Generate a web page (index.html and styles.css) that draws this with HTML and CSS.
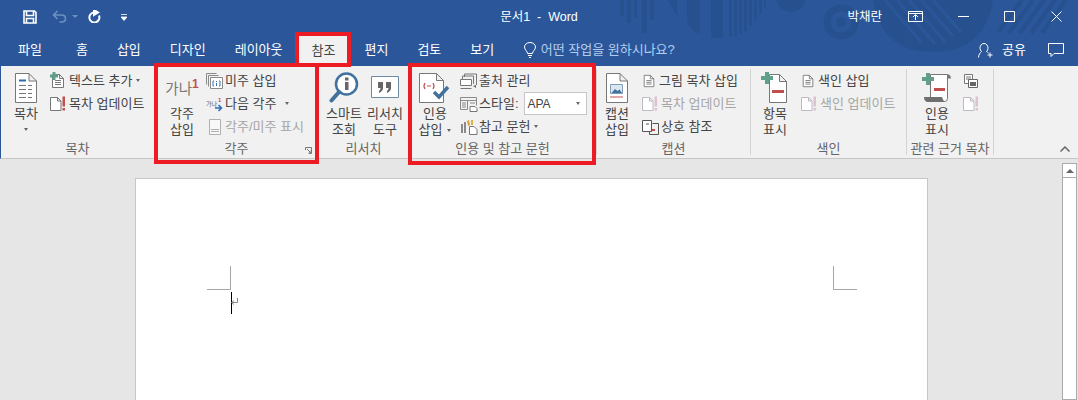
FILE: index.html
```html
<!DOCTYPE html>
<html lang="ko">
<head>
  <meta charset="UTF-8" />
  <title>문서1 - Word</title>
  <link rel="stylesheet" href="styles.css">
</head>
<body>
  <svg class="sprites" width="0" height="0">
    <symbol id="doc-alert" viewBox="0 0 18 16">
      <path d="M.5 1.5h7l3.500 3.500v9.500h-10.500z M7.500 1.500v3.500h3.500" fill="#fff" stroke="currentColor"/>
      <rect class="bang" x="12.500" y="0.500" width="2.500" height="10"/>
      <rect class="bang" x="12.500" y="12" width="2.500" height="2.500"/>
    </symbol>
    <symbol id="doc-lines" viewBox="0 0 16 16">
      <path d="M2.500 1.500h7l4 4v9h-11z M9.500 1.500v4h4" fill="#fff" stroke="#777"/>
      <path d="M5 7.500h6 M5 9.500h6 M5 11.500h6" stroke="#777"/>
    </symbol>
    <symbol id="green-plus" viewBox="0 0 11 11">
      <path d="M3.500 0h4v3.500h3.500v4h-3.500v3.500h-4v-3.500h-3.500v-4h3.500z" fill="#5f9f8c"/>
    </symbol>
  </svg>

  <!-- Title bar and tabs -->
  <header class="chrome">
    <svg class="chrome-art" width="478" height="66" viewBox="600 0 478 66">
      <g fill="#27508f">
        <path d="M620 0h4v16h-4z M627 0h4v23h-4z M634 0h3v18h-3z M642 0h5v33h-5z M650 0h4v20h-4z"/>
        <path d="M668 0h9v16z"/>
        <path d="M687 0h13v34q-10-4-13-12z M711 0h12v38h-12z"/>
        <path d="M729 0h3v37h-3z M734 0h3v36h-3z M739 0h3v34h-3z M744 0h3v31h-3z M749 0h3v26h-3z M754 0h3v20h-3z M759 0h3v14h-3z M764 0h2v8h-2z"/>
        <path d="M776 0h30q-4 12-15 12t-15-12z"/>
        <path d="M873 0h120q-8 52-60 52t-60-52z"/>
      </g>
      <circle cx="841" cy="22" r="14" fill="none" stroke="#27508f" stroke-width="7"/>
      <circle cx="841" cy="22" r="5" fill="#27508f"/>
      <g stroke="#2b579a" stroke-width="3">
        <path d="M885 0l36 42 M897 0l38 44 M909 0l36 42 M921 0l32 36 M933 0l28 32"/>
      </g>
      <g stroke="#27508f" stroke-width="4">
        <path d="M1022 0l-24 32 M1033 0l-24 33 M1044 0l-24 33 M1055 0l-24 33 M1066 0l-24 33"/>
      </g>
    </svg>

    <div class="titlebar">
      <div class="qat">
        <svg class="qat-save" width="14" height="14" viewBox="0 0 14 14"><path d="M1 1h10.500l1.500 1.500v10.500h-12z M3.500 1v4.500h7v-4.500 M3.500 13v-4.500h7v4.500" fill="none" stroke="#fff" stroke-width="1.600"/></svg>
        <svg class="qat-undo" width="15" height="13" viewBox="0 0 15 13"><path d="M5.500 1l-4 4 4 4 M1.500 5h8q4 0 4 3.500t-4 3.500h-2" fill="none" stroke="#6e8fc2" stroke-width="1.600"/></svg>
        <span class="qat-drop dim"></span>
        <svg class="qat-redo" width="14" height="13" viewBox="0 0 14 13"><path d="M9.500 2.500h-3a5 5 0 1 0 5.500 3 M7 0v5l4-2.500z" fill="none" stroke="#fff" stroke-width="2"/></svg>
        <svg class="qat-more" width="6" height="8" viewBox="0 0 6 8"><path d="M0 1.500h6 M0 4h6l-3 3.500z" fill="#fff" stroke="#fff" stroke-width="0.800"/></svg>
      </div>
      <div class="doc-title">문서1&nbsp; - &nbsp;Word</div>
      <div class="win">
        <span class="user">박채란</span>
        <svg class="win-display" width="15" height="11" viewBox="0 0 15 11"><path d="M.5.500h14v10h-14z M.5 2.500h14 M7.500 9v-5 M5 6l2.500-2.500 2.500 2.500" fill="none" stroke="#fff"/></svg>
        <svg class="win-min" width="11" height="1" viewBox="0 0 11 1"><path d="M0 .5h11" stroke="#fff"/></svg>
        <svg class="win-max" width="11" height="11" viewBox="0 0 11 11"><path d="M.5.500h10v10h-10z" fill="none" stroke="#fff"/></svg>
        <svg class="win-close" width="11" height="11" viewBox="0 0 11 11"><path d="M.5.500l10 10 M10.500.500l-10 10" stroke="#fff"/></svg>
      </div>
    </div>

    <nav class="tabs">
      <span class="tab tab-file">파일</span>
      <span class="tab">홈</span>
      <span class="tab">삽입</span>
      <span class="tab">디자인</span>
      <span class="tab">레이아웃</span>
      <span class="tab active">참조</span>
      <span class="tab">편지</span>
      <span class="tab">검토</span>
      <span class="tab">보기</span>
      <span class="tell">
        <svg width="12" height="16" viewBox="0 0 12 16"><path d="M3.500 11.500c0-2.500-3-3.500-3-6.500a5.500 4.500 0 0 1 11 0c0 3-3 4-3 6.500z M4 13.500h4 M5 15.500h2" fill="none" stroke="#fff"/></svg>
        어떤 작업을 원하시나요?
      </span>
      <span class="share">
        <svg width="15" height="16" viewBox="0 0 15 16"><path d="M.5 15.500c0-3 2-5 3-6a4 4.500 0 1 1 5 0q1 .5 2 1.500 M9.500 13h5 M12 10.500v5" fill="none" stroke="#fff"/></svg>
        공유
      </span>
      <svg class="comment" width="16" height="14" viewBox="0 0 16 14"><path d="M.5.500h15v10h-9.500l-3 3v-3h-2.500z" fill="none" stroke="#fff"/></svg>
    </nav>
  </header>

  <!-- Ribbon -->
  <section class="ribbon">
    <div class="group g-toc">
      <div class="group-body">
        <div class="big">
          <svg class="big-icon" width="22" height="30" viewBox="0 0 22 30">
            <path d="M.5.500h13.500l7.500 7.500v21.500h-21z M14 .500v7.500h7.500" fill="#fff" stroke="#777"/>
            <path d="M4 7.500h7" stroke="#2b6cb0" stroke-width="2"/>
            <path d="M4 12.500h7 M13 12.500h4 M4 16.500h7 M13 16.500h4 M4 20.500h7 M13 20.500h4 M4 24.500h7 M13 24.500h4" stroke="#777"/>
          </svg>
          <span class="big-label">목차</span>
          <span class="caret big-caret"></span>
        </div>
        <div class="small-col">
          <div class="row">
            <span class="row-icon has-plus">
              <svg width="16" height="16"><use href="#doc-lines"/></svg>
              <svg class="mini-plus" width="8" height="8"><use href="#green-plus"/></svg>
            </span>
            <span class="row-text tight">텍스트 추가</span><span class="caret"></span>
          </div>
          <div class="row">
            <svg class="row-icon alert" width="18" height="16"><use href="#doc-alert"/></svg>
            <span class="row-text">목차 업데이트</span>
          </div>
        </div>
      </div>
      <div class="group-label">목차</div>
    </div>

    <div class="group g-note">
      <div class="group-body">
        <div class="big">
          <div class="note-mark">가나<sup>1</sup></div>
          <span class="big-label">각주<br>삽입</span>
        </div>
        <div class="small-col">
          <div class="row">
            <svg class="row-icon" width="18" height="16" viewBox="0 0 18 16">
              <path d="M.5 11.500v-11h10 M2.500 13.500v-11h10" fill="none" stroke="#8a8a8a"/>
              <path d="M4.500 4.500h12v11h-12z" fill="#fff" stroke="#8a8a8a"/>
              <path d="M8 8h-1v5h1 M13 8h1v5h-1 M10.500 8v1 M10.500 10v3" fill="none" stroke="#3474b5"/>
            </svg>
            <span class="row-text">미주 삽입</span>
          </div>
          <div class="row">
            <svg class="row-icon" width="18" height="16" viewBox="0 0 18 16">
              <text x="0" y="10" class="tiny">가나</text>
              <text x="12" y="6" class="tiny-red">1</text>
              <path d="M9 12h6 M12.500 9l3 3-3 3" fill="none" stroke="#2b6cb0" stroke-width="1.500"/>
            </svg>
            <span class="row-text">다음 각주</span><span class="caret caret-far"></span>
          </div>
          <div class="row off">
            <svg class="row-icon" width="18" height="16" viewBox="0 0 18 16">
              <path d="M3.500.500h11v15h-11z" fill="#f8f8f8" stroke="#b0b0b0"/>
              <path d="M5 10.500h8 M5 12.500h8" stroke="#b0b0b0"/>
            </svg>
            <span class="row-text">각주/미주 표시</span>
          </div>
        </div>
      </div>
      <div class="group-label">각주</div>
      <svg class="launcher" width="7" height="7" viewBox="0 0 7 7"><path d="M.5 3v-2.500h6v6h-2.500 M2 2l4 4 M3.500 6h2.500v-2.500" fill="none" stroke="#777"/></svg>
    </div>

    <div class="group g-research">
      <div class="group-body">
        <div class="big">
          <svg class="big-icon" width="30" height="32" viewBox="0 0 30 32">
            <circle cx="17.500" cy="12" r="10.500" fill="#fff" stroke="#41719c" stroke-width="2.500"/>
            <path d="M10 20l-7.500 8.500" stroke="#41719c" stroke-width="4" stroke-linecap="round"/>
            <rect x="16" y="10" width="3.500" height="8" fill="#666"/>
            <rect x="16" y="5.500" width="3.500" height="3" fill="#666"/>
          </svg>
          <span class="big-label">스마트<br>조회</span>
        </div>
        <div class="big">
          <svg class="big-icon" width="28" height="32" viewBox="0 0 28 32">
            <path d="M.5 4.500h27v21h-27z" fill="#fff" stroke="#6e8aa5"/>
            <path d="M7 10h5v6q0 3-4 5v-2q1.500-1 1.500-3h-2.500z M15 10h5v6q0 3-4 5v-2q1.500-1 1.500-3h-2.500z" fill="#666"/>
          </svg>
          <span class="big-label">리서치<br>도구</span>
        </div>
      </div>
      <div class="group-label">리서치</div>
    </div>

    <div class="group g-cite">
      <div class="group-body">
        <div class="big">
          <svg class="big-icon" width="32" height="32" viewBox="0 0 32 32">
            <path d="M.5 1.500h17l7 7v22h-24z M17.500 1.500v7h7" fill="#fff" stroke="#777"/>
            <path d="M6 11q-2 3 0 6 M14 11q2 3 0 6 M8 14h4" fill="none" stroke="#c0504d" stroke-width="1.200"/>
            <path d="M15 20l5 5 9-10" fill="none" stroke="#41719c" stroke-width="3.500"/>
          </svg>
          <span class="big-label">인용<br>삽입<span class="caret caret-inline"></span></span>
        </div>
        <div class="small-col">
          <div class="row">
            <svg class="row-icon" width="18" height="16" viewBox="0 0 18 16">
              <path d="M4.500 4v-3h12v11" fill="none" stroke="#777"/>
              <path d="M2.500 6v-3h11v8" fill="none" stroke="#777"/>
              <path d="M.5 6.500h11v6h-11z M.5 15.500h11" fill="#fff" stroke="#777"/>
              <path d="M13 13l3-1v3z" fill="#666"/>
            </svg>
            <span class="row-text">출처 관리</span>
          </div>
          <div class="row">
            <svg class="row-icon" width="18" height="16" viewBox="0 0 18 16">
              <path d="M.5 1.500h16v3h-16z M.5 4.500h7v9h-7z M8.500 4.500h8v5" fill="none" stroke="#8a8a8a"/>
              <path d="M2 7h4 M2 9h4 M2 11h4 M10 7h5" stroke="#8a8a8a"/>
              <path d="M10 10.500h5l2 2v3h-7z" fill="#fff" stroke="#777"/>
            </svg>
            <span class="row-text">스타일:</span>
            <span class="combo">APA<span class="caret combo-caret"></span></span>
          </div>
          <div class="row">
            <svg class="row-icon" width="18" height="16" viewBox="0 0 18 16">
              <path d="M1 5h2v9h-2z M4 3h2v11h-2z" fill="#8a8a8a"/>
              <path d="M7 2l2-1 1 5-2 1z" fill="#e0a030"/>
              <path d="M11 1h2v5h-2z" fill="#d9b44a"/>
              <path d="M9.500 7.500h4.500l3 3v5h-7.500z" fill="#fff" stroke="#777"/>
            </svg>
            <span class="row-text">참고 문헌</span><span class="caret"></span>
          </div>
        </div>
      </div>
      <div class="group-label">인용 및 참고 문헌</div>
    </div>

    <div class="group g-caption">
      <div class="group-body">
        <div class="big">
          <svg class="big-icon" width="22" height="30" viewBox="0 0 22 30">
            <path d="M.5.500h13.500l7.500 7.500v21.500h-21z M14 .500v7.500h7.500" fill="#fff" stroke="#777"/>
            <path d="M4.500 11.500h12v9h-12z" fill="#dce6f1" stroke="#7f9db9"/>
            <path d="M5.500 20l3.500-4 2.500 2 2-1.500 2.500 3.500z" fill="#41719c"/>
            <path d="M4 24h13" stroke="#c0504d"/>
          </svg>
          <span class="big-label">캡션<br>삽입</span>
        </div>
        <div class="small-col">
          <div class="row">
            <svg class="row-icon icon-doc" width="14" height="16"><use href="#doc-lines"/></svg>
            <span class="row-text">그림 목차 삽입</span>
          </div>
          <div class="row off">
            <svg class="row-icon alert" width="18" height="16"><use href="#doc-alert"/></svg>
            <span class="row-text">목차 업데이트</span>
          </div>
          <div class="row">
            <svg class="row-icon" width="18" height="16" viewBox="0 0 18 16">
              <path d="M.5 1.500h9v11h-9z" fill="#fff" stroke="#555"/>
              <path d="M10.500 4.500h6v11h-9v-3" fill="none" stroke="#555"/>
              <path d="M4 5h3" stroke="#555"/>
              <path d="M10 11h3" stroke="#c0504d" stroke-width="2"/>
            </svg>
            <span class="row-text">상호 참조</span>
          </div>
        </div>
      </div>
      <div class="group-label">캡션</div>
    </div>

    <div class="group g-index">
      <div class="group-body">
        <div class="big">
          <svg class="big-icon" width="28" height="32" viewBox="0 0 28 32">
            <path d="M8.500 2.500h10l7 7v21h-17z M18.500 2.500v7h7" fill="#fff" stroke="#777"/>
            <path d="M4 0h4v4h4v4h-4v4h-4v-4h-4v-4h4z" fill="#5f9f8c"/>
            <rect x="11" y="18" width="12" height="3" fill="#c0504d"/>
          </svg>
          <span class="big-label">항목<br>표시</span>
        </div>
        <div class="small-col">
          <div class="row">
            <svg class="row-icon icon-doc" width="14" height="16"><use href="#doc-lines"/></svg>
            <span class="row-text">색인 삽입</span>
          </div>
          <div class="row off">
            <svg class="row-icon alert" width="18" height="16"><use href="#doc-alert"/></svg>
            <span class="row-text">색인 업데이트</span>
          </div>
        </div>
      </div>
      <div class="group-label">색인</div>
    </div>

    <div class="group g-refs">
      <div class="group-body">
        <div class="big">
          <svg class="big-icon" width="30" height="30" viewBox="0 0 30 30">
            <path d="M8.500 1.500h17v24q0 3-3 3h-14z" fill="#fff" stroke="#777"/>
            <path d="M25 1.500h2q2 1 2 4h-4z" fill="#777"/>
            <path d="M2 24h18q1 4 3 5h-18q-3-1-3-5z" fill="#6f6f6f"/>
            <path d="M4 0h4v4h4v4h-4v4h-4v-4h-4v-4h4z" fill="#5f9f8c"/>
            <rect x="12" y="15" width="11" height="3" fill="#c0504d"/>
          </svg>
          <span class="big-label">인용<br>표시</span>
        </div>
        <div class="small-col">
          <div class="row">
            <svg class="row-icon" width="16" height="16" viewBox="0 0 16 16">
              <path d="M1.500 1.500h8v9h-8z" fill="#fff" stroke="#777"/>
              <path d="M3 4h5 M3 6h5" stroke="#777"/>
              <path d="M5.500 6.500h9v8h-9z" fill="#fff" stroke="#666"/>
              <rect x="7" y="9" width="6" height="4" fill="#666"/>
            </svg>
          </div>
          <div class="row off">
            <svg class="row-icon alert" width="18" height="16"><use href="#doc-alert"/></svg>
          </div>
        </div>
      </div>
      <div class="group-label">관련 근거 목차</div>
    </div>

    <svg class="collapse" width="10" height="6" viewBox="0 0 10 6"><path d="M.5 5.500l4.500-4.500 4.500 4.500" fill="none" stroke="#666" stroke-width="1.500"/></svg>
  </section>

  <!-- Document area -->
  <main class="canvas">
    <div class="doc-area">
      <div class="sheet">
        <span class="margin-mark mark-left"></span>
        <span class="margin-mark mark-right"></span>
        <span class="caret-bar"></span>
        <svg class="return-mark" width="7" height="8" viewBox="0 0 7 8"><path d="M6.500 0v4.500h-6 M3 2.500l-2.500 2 2.500 2" fill="none" stroke="#888"/></svg>
      </div>
    </div>
    <div class="scrollbar">
      <div class="scroll-up"></div>
    </div>
  </main>

  <!-- Red annotation boxes -->
  <div class="callout callout-tab"></div>
  <div class="callout callout-note"></div>
  <div class="callout callout-cite"></div>
</body>
</html>
```

FILE: styles.css
```css
:root {
  --word-blue: #2b579a;
  --ribbon: #f1f1f1;
  --ink: #444;
  --muted: #a6a6a6;
  --line: #c6c6c6;
  --bang: #c0504d;
}

* {
  box-sizing: border-box;
}

html, body {
  margin: 0;
  padding: 0;
  height: 400px;
  overflow: hidden;
  background-color: #e6e6e6;
  font-family: "Liberation Sans", "Noto Sans CJK KR", sans-serif;
  font-size: 13px;
  line-height: 16px;
  color: var(--ink);
}

.sprites {
  position: absolute;
}

/* title bar + tabs */
.chrome {
  position: relative;
  height: 66px;
  background-color: var(--word-blue);
  color: #fff;
}

.chrome-art {
  position: absolute;
  top: 0;
  left: 600px;
}

.titlebar {
  position: relative;
  height: 33px;
  display: grid;
  grid-template-columns: 1fr auto 1fr;
  align-items: center;
}

.qat {
  display: flex;
  align-items: center;
  padding-left: 23px;
}

.qat-undo {
  margin-left: 15px;
}

.qat-drop {
  width: 0;
  height: 0;
  margin-left: 5px;
  border: 3px solid transparent;
  border-top-color: #6e8fc2;
  border-bottom: 0;
}

.qat-redo {
  margin-left: 9px;
}

.qat-more {
  margin-left: 20px;
}

.doc-title {
  font-size: 12.500px;
}

.win {
  display: flex;
  align-items: center;
  justify-content: flex-end;
  font-size: 12.500px;
}

.user {
  margin-right: 26px;
}

.win-display {
  margin-right: 35px;
}

.win-min {
  margin-right: 35px;
}

.win-max {
  margin-right: 36px;
}

.win-close {
  margin-right: 16px;
}

.tabs {
  position: relative;
  height: 33px;
  display: flex;
  align-items: center;
  padding-left: 3.500px;
}

.tab {
  padding: 0 14.500px;
  white-space: nowrap;
}

.tab-file {
  margin-right: 5px;
}

.tab.active {
  align-self: flex-end;
  height: 30px;
  line-height: 30px;
  background-color: var(--ribbon);
  color: var(--ink);
}

.tell {
  display: flex;
  align-items: center;
  gap: 5px;
  margin-left: 15px;
  color: #b3cdf0;
  white-space: nowrap;
}

.share {
  display: flex;
  align-items: center;
  gap: 9px;
  margin-left: auto;
  white-space: nowrap;
}

.comment {
  margin: 0 14px 0 22px;
}

/* ribbon */
.ribbon {
  height: 93px;
  display: flex;
  background-color: var(--ribbon);
  border-left: 1px solid var(--word-blue);
  border-bottom: 1px solid var(--line);
}

.group {
  position: relative;
  flex: none;
  height: 86px;
  margin-top: 3px;
  display: flex;
  flex-direction: column;
  border-right: 1px solid #d4d4d4;
}

.g-toc { width: 154px; }
.g-note { width: 164px; }
.g-research { width: 90px; }
.g-cite { width: 188px; }
.g-caption { width: 154px; }
.g-index { width: 156px; }
.g-refs { width: 87px; }

.group-body {
  flex: 1;
  display: flex;
  gap: 4px;
  padding-left: 5px;
}

.g-note .group-body { padding-left: 7px; }
.g-research .group-body { gap: 1px; }
.g-cite .group-body { padding-left: 6px; gap: 5px; }
.g-caption .group-body { padding-left: 0; gap: 5px; }
.g-index .group-body { padding-left: 4px; gap: 6px; }
.g-refs .group-body { padding-left: 10px; gap: 6px; }

.group-label {
  height: 14px;
  text-align: center;
  color: #666;
  white-space: nowrap;
}

.launcher {
  position: absolute;
  right: 6px;
  bottom: 1px;
}

.big {
  flex: none;
  width: 40px;
  display: flex;
  flex-direction: column;
  align-items: center;
  text-align: center;
}

.big-icon {
  height: 32px;
  margin: 3px 0 2px;
}

.big-label {
  display: block;
  white-space: nowrap;
}

.note-mark {
  height: 37px;
  padding-top: 9px;
  font-size: 14.500px;
  line-height: 22px;
  color: #777;
  white-space: nowrap;
}

.note-mark sup {
  font-size: 12px;
  line-height: 0;
  font-weight: 700;
  color: #c0504d;
}

.small-col {
  display: flex;
  flex-direction: column;
}

.row {
  height: 23px;
  display: flex;
  align-items: center;
  white-space: nowrap;
}

.row.off {
  --bang: #dcc2d2;
  color: var(--muted);
}

.row-icon {
  flex: none;
  margin-right: 1px;
  color: #777;
}

.row.off .row-icon {
  color: #c0b8c4;
}

.bang {
  fill: var(--bang);
}

.has-plus {
  position: relative;
  width: 16px;
  height: 16px;
  margin-right: 3px;
}

.mini-plus {
  position: absolute;
  top: -1px;
  left: 0;
}

.icon-doc {
  margin: 0 3px 0 0;
}

.tiny {
  font-size: 6px;
  fill: #555;
}

.tiny-red {
  font-size: 6px;
  font-weight: 700;
  fill: #c0504d;
}

.caret {
  display: inline-block;
  width: 0;
  height: 0;
  margin-left: 4px;
  border: 2.500px solid transparent;
  border-top: 3px solid #666;
  border-bottom: 0;
  vertical-align: middle;
}

.big-caret {
  margin: 6px 0 0;
}

.caret-far {
  margin-left: 9px;
}

.caret-inline {
  margin-left: 5px;
}

.combo {
  width: 63px;
  height: 23px;
  margin-left: 5px;
  padding-left: 3px;
  display: flex;
  align-items: center;
  justify-content: space-between;
  background-color: #fff;
  border: 1px solid var(--line);
  font-size: 12px;
}

.combo-caret {
  margin-right: 6px;
}

.collapse {
  align-self: flex-end;
  margin: 0 8px 6px auto;
}

/* document */
.canvas {
  height: 241px;
  display: flex;
  padding-right: 1px;
  overflow: hidden;
}

.doc-area {
  flex: 1;
  padding: 19px 0 0 135px;
}

.sheet {
  position: relative;
  width: 793px;
  height: 222px;
  background-color: #fff;
  border: 1px solid var(--line);
  border-bottom: 0;
}

.margin-mark {
  position: absolute;
  top: 87px;
  width: 24px;
  height: 24px;
  border-bottom: 1px solid #a6a6a6;
}

.mark-left {
  left: 71px;
  border-right: 1px solid #a6a6a6;
}

.mark-right {
  left: 697px;
  border-left: 1px solid #a6a6a6;
}

.caret-bar {
  position: absolute;
  top: 113px;
  left: 95px;
  width: 1px;
  height: 22px;
  background-color: #000;
}

.return-mark {
  position: absolute;
  top: 119px;
  left: 95px;
}

.scrollbar {
  flex: none;
  width: 15px;
  margin-top: 4px;
  background-color: #fff;
  border: 1px solid #ababab;
}

.scroll-up {
  height: 14px;
  display: flex;
  align-items: center;
  justify-content: center;
  border-bottom: 1px solid #ababab;
}

.scroll-up::before {
  content: "";
  border: 4px solid transparent;
  border-bottom: 4px solid #666;
  border-top: 0;
}

/* red boxes */
.callout {
  position: absolute;
  border: 4px solid #ed1c24;
}

.callout-tab {
  left: 295px;
  top: 32px;
  width: 56px;
  height: 35px;
}

.callout-note {
  left: 154px;
  top: 63px;
  width: 165px;
  height: 101px;
}

.callout-cite {
  left: 408px;
  top: 63px;
  width: 188px;
  height: 102px;
}
```
